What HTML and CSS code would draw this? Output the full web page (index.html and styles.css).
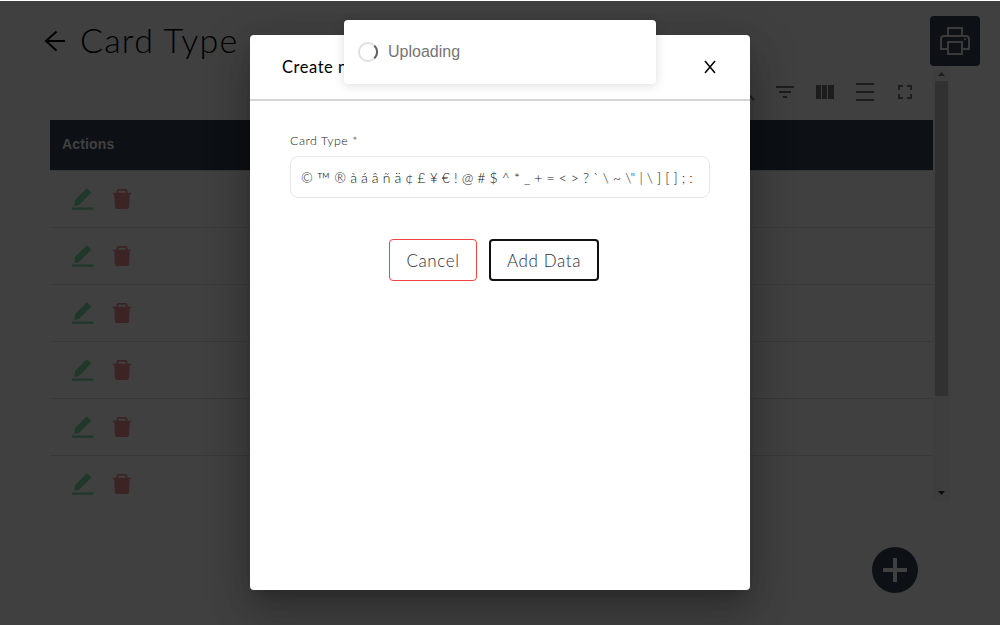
FILE: index.html
```
<!DOCTYPE html>
<html lang="en">
<head>
<meta charset="utf-8">
<title>Card Type</title>
<link rel="stylesheet" href="styles.css">
</head>
<body>
<svg class="defs" width="0" height="0">
  <symbol id="edit" viewBox="0 0 24 24"><path d="M15.800 1.300 20.400 5.600 8.200 17.800Q7.500 18.600 3.300 18.700L4 12.900zM1 20.500h21.200v2.200H1q-.8-1.100 0-2.200z"/></symbol>
  <symbol id="trash" viewBox="0 0 22 24"><path fill-rule="evenodd" d="M5 5V3Q5 1 7 1h8q2 0 2 2v2h4.200v1.800H19.500L18.800 21q-.2 2-2 2H5.200q-1.800 0-2-2L2.500 6.800H.8V5zm2 0h8V2.800H7z"/></symbol>
</svg>
<main class="page">
  <header class="top">
    <svg class="back" viewBox="0 0 22 22"><path d="M21 11H2M12.500 1.500 2 11l10.500 9.500"/></svg>
    <h1 class="title">Card Type</h1>
    <button class="print" aria-label="Print">
      <svg width="30" height="30" viewBox="0 0 30 30"><path d="M8 9V2h14v7M8 23H1V13q0-3 3-3h22q3 0 3 3v10h-7M8 16h14v12H8z"/><circle cx="25" cy="13.200" r="1.100"/></svg>
    </button>
  </header>
  <section class="panel">
    <div class="content">
      <div class="tools">
        <svg viewBox="0 0 20 20"><path d="M8 1a6 6 0 1 0 0 12A6 6 0 1 0 8 1M12.500 11.500 19 18" class="line"/></svg>
        <svg viewBox="0 0 20 20"><path d="M1 4h18v2H1zM4 9h12v2H4zM8 14h4v2H8z"/></svg>
        <svg viewBox="0 0 20 20"><path d="M1 3h5v14H1zM7 3h5v14H7zM13 3h6v14h-6z"/></svg>
        <svg viewBox="0 0 20 20"><path d="M1 1h18v2H1zM1 9h18v2H1zM1 17h18v2H1z"/></svg>
        <svg viewBox="0 0 20 20"><path d="M4 8V4h4M12 4h4v4M16 12v4h-4M8 16H4v-4" class="line"/></svg>
      </div>
      <div class="thead">Actions</div>
      <div class="row"><svg class="edit"><use href="#edit"/></svg><svg class="trash"><use href="#trash"/></svg></div>
      <div class="row"><svg class="edit"><use href="#edit"/></svg><svg class="trash"><use href="#trash"/></svg></div>
      <div class="row"><svg class="edit"><use href="#edit"/></svg><svg class="trash"><use href="#trash"/></svg></div>
      <div class="row"><svg class="edit"><use href="#edit"/></svg><svg class="trash"><use href="#trash"/></svg></div>
      <div class="row"><svg class="edit"><use href="#edit"/></svg><svg class="trash"><use href="#trash"/></svg></div>
      <div class="row"><svg class="edit"><use href="#edit"/></svg><svg class="trash"><use href="#trash"/></svg></div>
    </div>
    <div class="scroll">
      <svg class="up" width="7" height="4" viewBox="0 0 7 4"><path d="M0 4 3.500 0 7 4z"/></svg>
      <div class="thumb"></div>
      <svg class="down" width="7" height="4" viewBox="0 0 7 4"><path d="M0 0h7L3.500 4z"/></svg>
    </div>
  </section>
  <button class="add" aria-label="Add"><svg width="24" height="24" viewBox="0 0 24 24"><path d="M12 0v24M0 12h24"/></svg></button>
</main>
<div class="overlay">
  <section class="modal">
    <header class="modal-head">
      <h2 class="modal-title">Create new</h2>
      <svg class="close" width="12" height="14" viewBox="0 0 12 14"><path d="M1 1 11 13M11 1 1 13"/></svg>
    </header>
    <div class="form">
      <label class="label">Card Type *</label>
      <div class="input"><span>©</span><span class="tm">™</span><span>®</span><span>à</span><span>á</span><span>â</span><span>ñ</span><span>ä</span><span>¢</span><span>£</span><span>¥</span><span>€</span><span>!</span><span>@</span><span>#</span><span>$</span><span>^</span><span>*</span><span>_</span><span>+</span><span>=</span><span>&lt;</span><span>&gt;</span><span>?</span><span>`</span><span>\</span><span>~</span><span>\"</span><span>|</span><span>\</span><span>]</span><span>[</span><span>]</span><span>;</span><span>:</span></div>
      <div class="buttons">
        <button class="btn cancel">Cancel</button>
        <button class="btn submit">Add Data</button>
      </div>
    </div>
  </section>
</div>
<div class="toast"><svg width="20" height="20" viewBox="0 0 20 20"><circle cx="10" cy="10" r="9"/><path d="M16.400 3.600a9 9 0 0 1 0 12.800"/></svg><span>Uploading</span></div>
</body>
</html>
```
FILE: styles.css
```
* { box-sizing: border-box; }
body { margin: 0; width: 1000px; height: 625px; overflow: hidden; background: #fff; font-family: Lato, sans-serif; font-weight: 300; }
h1, h2 { margin: 0; font-weight: 300; }
button { padding: 0; border: 0; font: inherit; display: flex; align-items: center; justify-content: center; }
svg { display: block; flex: none; }
.defs { position: absolute; }
.page { height: 625px; display: flex; flex-direction: column; }
.top { height: 70px; padding: 16px 20px 0 44px; display: flex; align-items: flex-start; }
.back { width: 22px; height: 22px; margin-top: 14px; fill: none; stroke: #000; stroke-width: 2; }
.title { margin: 3px 0 0 14px; font-size: 34px; line-height: 42px; letter-spacing: 1.2px; color: #000; }
.print { width: 50px; height: 50px; margin-left: auto; border-radius: 4px; background: #344050; }
.print svg { fill: none; stroke: #e8e8e8; stroke-width: 2; }
.print circle { fill: #e8e8e8; stroke: none; }
.panel { height: 431px; padding: 0 50px; display: flex; margin-top: -2px; }
.content { width: 883px; height: 431px; overflow: hidden; }
.tools { height: 52px; padding: 14px 18px 0 0; display: flex; justify-content: flex-end; gap: 20px; }
.tools svg { width: 20px; height: 20px; fill: #757575; }
.tools .line { fill: none; stroke: #757575; stroke-width: 2; }
.thead { height: 51px; padding: 0 12px; background: #344050 content-box; background-clip: border-box; border-bottom: 1px solid #e0e0e0; color: #fff; font: bold 14px/48px "Liberation Sans", Arial, sans-serif; letter-spacing: .15px; }
.row { height: 57px; padding-left: 21px; display: flex; align-items: center; gap: 17px; border-bottom: 1px solid #e0e0e0; }
.edit { width: 24px; height: 24px; fill: #7be0a4; }
.trash { width: 20px; height: 24px; fill: #f09090; }
.scroll { width: 17px; height: 433px; background: #f8f8f8; padding: 4px 2px 6px; display: flex; flex-direction: column; align-items: center; }
.up { fill: #707070; }
.down { margin-top: auto; fill: #303030; }
.thumb { width: 13px; height: 315px; margin-top: 5px; background: #c1c1c1; }
.add { width: 46px; height: 46px; margin: 48px 82px 0 auto; border-radius: 50%; background: #344050; }
.add svg { fill: none; stroke: #fff; stroke-width: 4; }
.overlay { position: absolute; inset: 1px 0 0; background: rgba(0,0,0,.75); display: flex; justify-content: center; align-items: flex-start; padding-top: 34px; }
.modal { width: 500px; height: 555px; background: #fff; border-radius: 4px; box-shadow: 0 11px 15px -7px rgba(0,0,0,.2), 0 24px 38px 3px rgba(0,0,0,.14), 0 9px 46px 8px rgba(0,0,0,.12); }
.modal-head { height: 66px; padding: 0 34px 0 32px; display: flex; align-items: center; justify-content: space-between; border-bottom: 2px solid #d4d4d4; }
.modal-title { font-size: 16.500px; font-weight: 400; letter-spacing: .55px; color: #000; }
.close { fill: none; stroke: #000; stroke-width: 1.500; }
.form { padding: 31px 40px 0; }
.label { display: block; font-size: 12.500px; line-height: 18px; letter-spacing: .45px; color: #222; }
.input { height: 42px; margin-top: 6px; padding: 1px 16px 0 10px; display: flex; align-items: center; justify-content: space-between; border: 1px solid #e5e7eb; border-radius: 8px; font-size: 14px; color: #111; }
.tm { font-size: 18px; line-height: 14px; padding-top: 3px; }
.buttons { margin-top: 41px; padding-left: 99px; display: flex; gap: 12px; }
.btn { height: 42px; border-radius: 4px; background: #fff; color: #27303c; font-size: 17px; letter-spacing: .6px; }
.cancel { width: 88px; border: 1px solid #ef4444; }
.submit { width: 110px; border: 2px solid #111; }
.toast { position: absolute; left: 344px; top: 20px; width: 312px; height: 64px; padding: 0 14px; display: flex; align-items: center; gap: 10px; background: #fff; border-radius: 4px; box-shadow: 0 1px 10px rgba(0,0,0,.1), 0 2px 15px rgba(0,0,0,.05); color: #757575; font: 16px/24px "Liberation Sans", Arial, sans-serif; }
.toast svg { fill: none; stroke: #e0e0e0; stroke-width: 2; }
.toast path { stroke: #616161; }
```
